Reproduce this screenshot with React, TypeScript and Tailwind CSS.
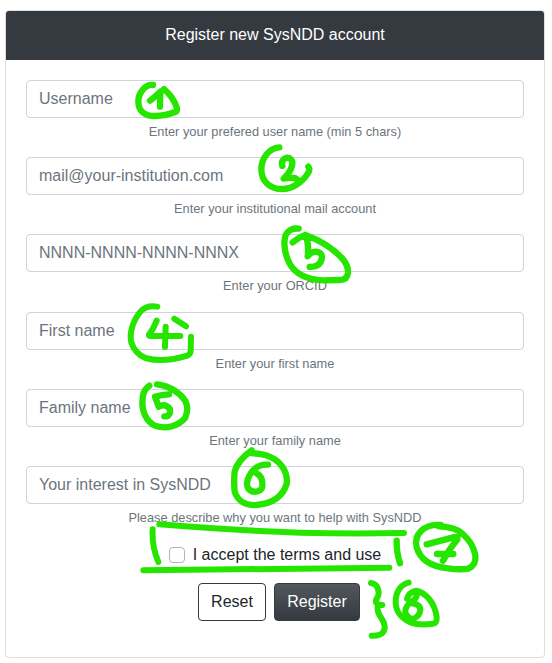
import React from "react";

const fields = [
  { placeholder: "Username", help: "Enter your prefered user name (min 5 chars)" },
  { placeholder: "mail@your-institution.com", help: "Enter your institutional mail account" },
  { placeholder: "NNNN-NNNN-NNNN-NNNX", help: "Enter your ORCID" },
  { placeholder: "First name", help: "Enter your first name" },
  { placeholder: "Family name", help: "Enter your family name" },
  { placeholder: "Your interest in SysNDD", help: "Please describe why you want to help with SysNDD" },
];

// Hand-drawn marker strokes; each group is drawn at three times its size.
const marks = [
  { x: 120, y: 70, w: 19, d: "M99 45C76 42 55 68 55 95C55 124 75 138 105 138Q138 137 165 126Q173 123 170 112Q160 82 132 57M90 92Q106 80 121 65L120 110" },
  { x: 240, y: 130, w: 19, d: "M118 52C86 54 64 86 64 118C64 156 92 178 130 177C162 176 193 151 207 124Q210 116 205 110M127 108C121 89 140 77 153 88C165 101 148 132 131 146Q149 143 165 144L174 151" },
  { x: 260, y: 215, w: 19, d: "M116 41Q94 38 81 54C68 72 72 116 90 148C111 182 145 194 190 196L238 195Q262 195 264 173Q265 153 250 134C221 101 178 75 136 60Q114 68 98 82M136 60Q148 86 143 124C157 103 185 108 186 125Q184 156 149 156" },
  { x: 110, y: 290, w: 18, d: "M142 50Q111 44 93 63C69 90 57 130 64 158Q75 190 106 204C145 215 193 209 232 197Q242 193 242 181L243 140M140 92Q131 116 117 134Q114 139 130 138L211 138M167 110L165 171M193 86L228 109" },
  { x: 110, y: 370, w: 19, d: "M118 47Q101 57 98 83C93 124 109 155 137 168C170 178 205 168 226 143Q238 113 225 91C207 66 174 46 141 43M177 73Q155 74 135 80L146 110C163 100 184 111 180 128Q176 141 163 139" },
  { x: 210, y: 440, w: 19, d: "M125 31C104 46 82 65 74 94Q71 123 74 155C82 181 105 197 139 195C185 191 218 170 230 132C235 92 209 59 168 46Q151 41 124 39M174 74Q149 73 135 86C116 102 105 131 115 146C130 163 155 154 157 139Q159 110 141 101" },
  { x: 120, y: 500, w: 18, d: "M98 88Q95 139 115 186M118 73C230 82 380 93 540 98Q690 102 852 99M70 211Q390 208 808 203" },
  { x: 390, y: 510, w: 19, d: "M152 45C104 40 70 73 80 112C91 151 127 170 174 175Q207 180 235 176Q260 164 256 135Q248 98 222 76Q202 51 147 49M110 103L190 82Q205 77 202 88Q178 116 159 152M141 132L190 132M20 92Q19 126 30 160" },
  { x: 350, y: 570, w: 18, d: "M63 39Q79 42 83 54Q89 69 83 81C71 97 81 106 97 105C75 103 83 123 88 135C98 151 112 169 99 187Q90 198 65 197M176 38C154 43 136 64 137 98C138 128 154 144 181 157Q205 166 244 162Q262 163 260 141Q256 111 239 89C225 71 212 64 198 62C184 66 174 75 171 86M198 67Q206 84 181 97C167 108 163 123 168 132Q178 149 191 147Q209 137 211 121Q212 103 184 100" },
];

export default function App() {
  return (
    <main className="relative h-[663px] w-[552px] overflow-hidden bg-white font-['Liberation_Sans',Arial,sans-serif] text-base text-[#212529]">
      <div className="px-[5px] pt-2.5">
        <section className="mr-0.5 overflow-hidden rounded border border-[#dfdfdf]">
          <header className="h-[49px] bg-[#343a40] pt-3 text-center leading-6 text-white">
            Register new SysNDD account
          </header>
          <form className="p-5" onSubmit={(e) => e.preventDefault()}>
            {fields.map((field) => (
              <div key={field.placeholder} className="mb-4">
                <input
                  aria-label={field.placeholder}
                  placeholder={field.placeholder}
                  className="block h-[38px] w-full rounded border border-[#ced4da] bg-white px-3 placeholder:text-[#6c757d] placeholder:opacity-100"
                />
                <small className="mt-1 block text-center text-[12.8px] leading-[19.2px] text-[#6c757d]">
                  {field.help}
                </small>
              </div>
            ))}
            <label className="mb-4 flex h-6 items-center justify-center gap-2 leading-6">
              <input type="checkbox" className="size-4 appearance-none rounded border border-[#adb5bd] bg-white" />
              I accept the terms and use
            </label>
            <div className="mb-4 flex justify-center gap-2 pl-2">
              <button type="reset" className="h-[38px] w-[68px] rounded border border-[#343a40] leading-6">
                Reset
              </button>
              <button type="submit" className="h-[38px] w-[86px] rounded border border-[#343a40] bg-linear-to-b from-[#52585d] to-[#343a40] leading-6 text-white">
                Register
              </button>
            </div>
          </form>
        </section>
      </div>
      <svg
        className="pointer-events-none absolute inset-0"
        width="552"
        height="663"
        fill="none"
        stroke="#26e600"
        strokeLinecap="round"
        strokeLinejoin="round"
      >
        {marks.map((mark) => (
          <path
            key={mark.d}
            d={mark.d}
            strokeWidth={mark.w}
            transform={`translate(${mark.x} ${mark.y}) scale(${1 / 3})`}
          />
        ))}
      </svg>
    </main>
  );
}
